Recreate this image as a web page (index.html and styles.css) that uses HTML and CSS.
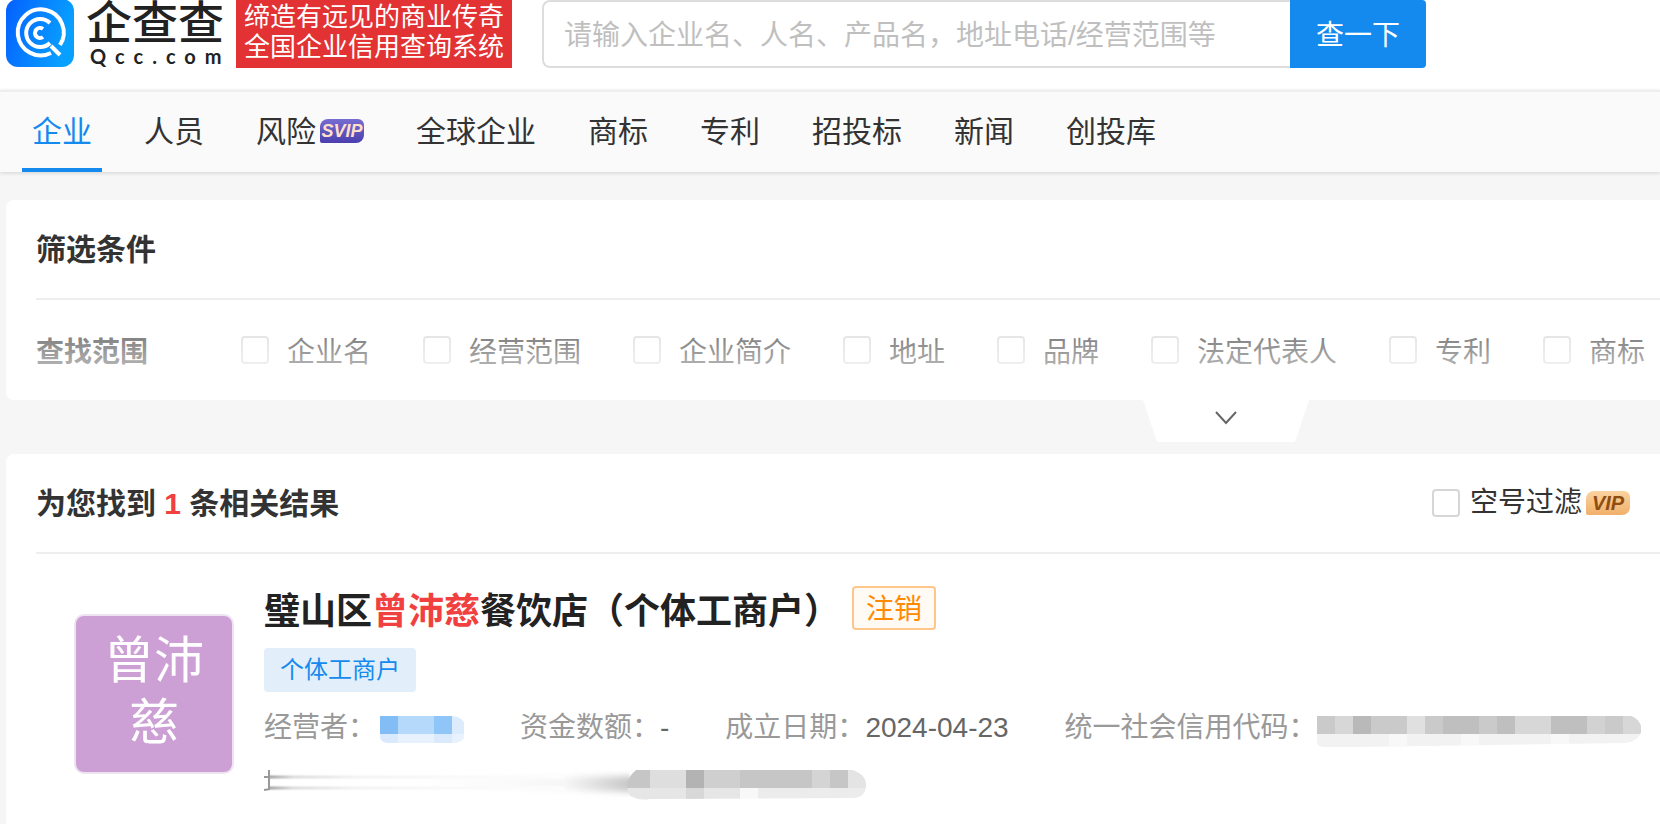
FILE: index.html
```html
<!DOCTYPE html>
<html lang="zh-CN">
<head>
	<meta charset="utf-8">
	<title>企查查</title>
	<link rel="stylesheet" href="styles.css">
</head>
<body>

	<header class="header">
		<a class="logo" href="#home">
			<svg class="logo-icon" width="68" height="68" viewBox="0 0 68 68" aria-hidden="true">
				<defs>
					<linearGradient id="logobg" x1="0" y1="0" x2="1" y2="0.3">
						<stop offset="0" stop-color="#0560ff"/>
						<stop offset="1" stop-color="#08a0ff"/>
					</linearGradient>
				</defs>
				<rect y="-1" width="68" height="68" rx="12" fill="url(#logobg)"/>
				<g fill="none" stroke="#fff" stroke-width="4">
					<path d="M54 45A23 23 0 1 0 45 53"/>
					<path d="M44 23A14 14 0 1 0 44 43"/>
					<path d="M37 29A5 5 0 1 0 37 37"/>
					<path d="M45 46L54 55"/>
				</g>
			</svg>
			<span class="logo-name">
				<span class="logo-cn">企查查</span>
				<span class="logo-en">Qcc.com</span>
			</span>
		</a>
		<div class="slogan">
			<div>缔造有远见的商业传奇</div>
			<div>全国企业信用查询系统</div>
		</div>
		<form class="search">
			<input class="search-input" type="text" aria-label="搜索" placeholder="请输入企业名、人名、产品名，地址电话/经营范围等">
			<button class="search-btn" type="button">查一下</button>
		</form>
	</header>

	<nav class="main-nav">
		<a class="nav-ref active" href="#company">企业</a>
		<a class="nav-ref" href="#person">人员</a>
		<a class="nav-ref" href="#risk">风险<span class="badge svip">SVIP</span></a>
		<a class="nav-ref" href="#global">全球企业</a>
		<a class="nav-ref" href="#brand">商标</a>
		<a class="nav-ref" href="#patent">专利</a>
		<a class="nav-ref" href="#bid">招投标</a>
		<a class="nav-ref" href="#news">新闻</a>
		<a class="nav-ref" href="#venture">创投库</a>
	</nav>

	<main class="content">
		<section class="card filter">
			<h2 class="card-title">筛选条件</h2>
			<div class="filter-row">
				<span class="filter-label">查找范围</span>
				<label class="check"><input type="checkbox">企业名</label>
				<label class="check"><input type="checkbox">经营范围</label>
				<label class="check"><input type="checkbox">企业简介</label>
				<label class="check"><input type="checkbox">地址</label>
				<label class="check"><input type="checkbox">品牌</label>
				<label class="check"><input type="checkbox">法定代表人</label>
				<label class="check"><input type="checkbox">专利</label>
				<label class="check"><input type="checkbox">商标</label>
			</div>
		</section>
		<div class="toggle-bar">
			<button class="toggle" type="button" aria-label="展开">
				<svg width="24" height="16" viewBox="0 0 24 16"><path d="M2 2L12 13L22 2" fill="none" stroke="#666" stroke-width="2"/></svg>
			</button>
		</div>

		<section class="card result">
			<div class="card-title result-head">
				<h2 class="result-count">为您找到 <em>1</em> 条相关结果</h2>
				<label class="check vip-check"><input type="checkbox">空号过滤<span class="badge vip">VIP</span></label>
			</div>
			<article class="company">
				<div class="avatar">曾沛慈</div>
				<div class="info">
					<div class="name-row">
						<a class="name" href="#detail">璧山区<em>曾沛慈</em>餐饮店（个体工商户）</a>
						<span class="status">注销</span>
					</div>
					<span class="tag">个体工商户</span>
					<div class="facts">
						<span class="fact">经营者：<svg class="mask" width="88" height="28" viewBox="-3 0 88 28">
							<clipPath id="m1"><path d="M1 0H74Q87 2 87 14Q87 27 74 27H10Q1 27 1 20Z"/></clipPath>
							<g clip-path="url(#m1)">
								<path fill="#e7f2fe" d="M0 18H87V28H0Z"/>
								<path fill="#dae9fb" d="M0 18H19V28H0ZM55 18H73V28H55Z"/>
								<path fill="#83bdf5" d="M0 0H19V18H0Z"/>
								<path fill="#b5d9fb" d="M19 0H55V18H19Z"/>
								<path fill="#90c5f7" d="M55 0H73V18H55Z"/>
								<path fill="#dcecfc" d="M73 0H87V18H73Z"/>
							</g>
						</svg></span>
						<span class="fact">资金数额：<b>-</b></span>
						<span class="fact">成立日期：<b>2024-04-23</b></span>
						<span class="fact">统一社会信用代码：<svg class="mask" width="324" height="32" viewBox="0 0 324 32">
							<clipPath id="m2"><path d="M0 0H314Q324 4 324 13Q324 25 308 27L40 31H8Q0 31 0 26Z"/></clipPath>
							<g clip-path="url(#m2)">
								<path fill="#f2f2f2" d="M0 18H324V32H0Z"/>
								<path fill="#f8f8f8" d="M72 18H90V32H72ZM144 18H162V32H144ZM234 18H252V32H234Z"/>
								<path fill="#cacaca" d="M0 0H324V18H0Z"/>
								<path fill="#d7d7d7" d="M18 0H36V18H18ZM198 0H234V18H198ZM306 0H324V18H306Z"/>
								<path fill="#b9b9b9" d="M36 0H54V18H36Z"/>
								<path fill="#e0e0e0" d="M90 0H108V18H90Z"/>
								<path fill="#bfbfbf" d="M126 0H162V18H126ZM180 0H198V18H180ZM234 0H270V18H234Z"/>
								<path fill="#d2d2d2" d="M270 0H288V18H270Z"/>
							</g>
						</svg></span>
					</div>
					<svg class="address" width="602" height="32" viewBox="0 0 602 32">
						<defs>
							<linearGradient id="fadeout"><stop offset="0" stop-color="#777"/><stop offset="0.08" stop-color="#ccc"/><stop offset="0.3" stop-color="#eee"/><stop offset="1" stop-color="#fff"/></linearGradient>
							<linearGradient id="fadein"><stop offset="0" stop-color="#fff"/><stop offset="0.7" stop-color="#f6f6f6"/><stop offset="1" stop-color="#c8c8c8"/></linearGradient>
							<filter id="soft" x="-10%" y="-100%" width="120%" height="300%"><feGaussianBlur stdDeviation="1 3"/></filter>
							<filter id="thin" x="0" y="-20%" width="100%" height="140%"><feGaussianBlur stdDeviation="0 1"/></filter>
							<clipPath id="m3"><path d="M372 0H588Q602 4 602 15Q602 27 590 28L386 29Q376 31 366 26Q358 12 372 0Z"/></clipPath>
						</defs>
						<path fill="url(#fadein)" filter="url(#soft)" d="M150 8L366 6V22L150 16Z"/>
						<path fill="url(#fadeout)" filter="url(#thin)" d="M6 6H300V8H6ZM6 17H300V19H6Z"/>
						<path fill="none" stroke="#999" stroke-width="2" d="M5 0V20M0 7H6M0 20L6 19"/>
						<g clip-path="url(#m3)">
							<path fill="#e6e6e6" d="M360 18H476V32H360Z"/>
							<path fill="#d8d8d8" d="M422 18H440V32H422Z"/>
							<path fill="#f8f8f8" d="M476 18H494V32H476Z"/>
							<path fill="#ececec" d="M494 18H602V32H494Z"/>
							<path fill="#c6c6c6" d="M360 0H386V18H360ZM476 0H548V18H476ZM566 0H584V18H566Z"/>
							<path fill="#dedede" d="M386 0H422V18H386Z"/>
							<path fill="#b3b3b3" d="M422 0H440V18H422Z"/>
							<path fill="#cfcfcf" d="M440 0H476V18H440Z"/>
							<path fill="#d4d4d4" d="M548 0H566V18H548Z"/>
							<path fill="#e4e4e4" d="M584 0H602V18H584Z"/>
						</g>
					</svg>
				</div>
			</article>
		</section>
	</main>

</body>
</html>
```
FILE: styles.css
```css
*{
	box-sizing: border-box;
}
body{
	margin: 0;
	min-height: 100vh;
	overflow-x: hidden;
	display: flex;
	flex-direction: column;
	background-color: #f6f6f6;
	color: #333;
	font-family: "Liberation Sans", "Noto Sans CJK SC", sans-serif;
	font-size: 28px;
}
a{
	color: inherit;
	text-decoration: none;
}
em{
	font-style: normal;
	color: #f04040;
}
h2{
	margin: 0;
}
svg{
	display: block;
	flex-shrink: 0;
}
input, button{
	font: inherit;
	margin: 0;
}

/* header */
.header{
	display: flex;
	align-items: flex-start;
	padding: 0 6px 22px;
	background-color: #fff;
}
.logo{
	display: flex;
	gap: 12px;
}
.logo-name{
	display: flex;
	flex-direction: column;
	width: 150px;
	color: #222;
}
.logo-cn{
	font-size: 46px;
	line-height: 46px;
	font-weight: 500;
}
.logo-en{
	padding-left: 4px;
	font-family: Lato, sans-serif;
	font-size: 20px;
	line-height: 20px;
	font-weight: 700;
	letter-spacing: 9px;
}
.slogan{
	height: 68px;
	padding: 2px 8px 0;
	background-color: #e23234;
	color: #fff;
	font-size: 26px;
	line-height: 30px;
	white-space: nowrap;
}
.search{
	display: flex;
	width: 884px;
	margin-left: 30px;
}
.search-input{
	flex: 1;
	min-width: 0;
	height: 68px;
	padding: 4px 20px 0;
	border: 2px solid #ddd;
	border-right: 0;
	border-radius: 8px 0 0 8px;
	background-color: #fff;
	outline: none;
}
.search-input::placeholder{
	color: #bfbfbf;
}
.search-btn{
	width: 136px;
	padding: 0 0 2px;
	border: 0;
	border-radius: 0 4px 4px 0;
	background-color: #158aee;
	color: #fff;
}

/* nav */
.main-nav{
	display: flex;
	gap: 32px;
	padding: 0 22px;
	border-top: 2px solid #eee;
	background-color: #fafafa;
	box-shadow: 0 1px 4px rgba(0,0,0,0.15);
}
.nav-ref{
	display: flex;
	align-items: center;
	height: 80px;
	padding: 0 10px 2px;
	border-bottom: 4px solid transparent;
	font-size: 30px;
	white-space: nowrap;
}
.nav-ref.active{
	color: #158aee;
	border-bottom-color: #158aee;
}
.badge{
	width: 44px;
	height: 24px;
	margin-left: 4px;
	border-radius: 8px 6px 8px 2px;
	font-size: 18px;
	line-height: 24px;
	font-weight: 700;
	font-style: italic;
	text-align: center;
}
.svip{
	margin-top: 4px;
	background: linear-gradient(#766dd2, #4a3fae);
	color: #ffdfc8;
}
.vip{
	background: linear-gradient(#fbd3a0, #f0b06a);
	color: #8f4d12;
	font-size: 20px;
}

/* cards */
.content{
	display: flex;
	flex: 1;
	flex-direction: column;
	padding: 28px 0 0 6px;
}
.card{
	padding-left: 30px;
	border-radius: 8px 0 0 8px;
	background-color: #fff;
}
.card-title{
	height: 100px;
	border-bottom: 2px solid #eee;
	font-size: 30px;
	line-height: 100px;
	font-weight: 700;
}
.filter{
	position: relative;
	overflow: hidden;
}
.filter::after{
	content: "";
	position: absolute;
	left: 0;
	right: 0;
	bottom: 0;
	height: 98px;
	background: linear-gradient(rgba(255,255,255,0.1), rgba(255,255,255,0.9));
	pointer-events: none;
}
.filter-row{
	display: flex;
	align-items: center;
	gap: 52px;
	height: 100px;
	white-space: nowrap;
}
.filter-label{
	width: 153px;
	font-weight: 700;
}
.check{
	display: flex;
	align-items: center;
	gap: 18px;
}
.check input{
	appearance: none;
	width: 28px;
	height: 28px;
	border: 2px solid #d6d6d6;
	border-radius: 4px;
	background-color: #fff;
}
.toggle-bar{
	display: flex;
	justify-content: flex-end;
	height: 54px;
	padding-right: 351px;
}
.toggle{
	display: flex;
	justify-content: center;
	width: 166px;
	height: 42px;
	padding: 10px 0;
	border: 0;
	background-color: #fff;
	clip-path: polygon(0 0, 100% 0, 152px 100%, 14px 100%);
}

/* result */
.result{
	flex: 1;
	border-bottom-left-radius: 0;
}
.result-head{
	display: flex;
	justify-content: space-between;
	padding-right: 30px;
}
.result-count{
	font-size: 30px;
	font-weight: 700;
}
.vip-check{
	gap: 10px;
	font-size: 28px;
	font-weight: 400;
}
.vip-check .badge{
	margin-left: -6px;
}
.company{
	display: flex;
	align-items: flex-start;
	gap: 30px;
	padding: 32px 0 24px 38px;
}
.avatar{
	width: 160px;
	height: 160px;
	margin-top: 28px;
	padding: 14px 26px;
	border: 2px solid #eee4f1;
	border-radius: 10px;
	background-color: #cc9fd5;
	color: #fff;
	font-size: 50px;
	line-height: 62px;
	text-align: center;
}
.name-row{
	display: flex;
	align-items: center;
	gap: 12px;
	height: 44px;
	margin-bottom: 18px;
	white-space: nowrap;
}
.name{
	color: #222;
	font-size: 36px;
	font-weight: 700;
}
.status{
	padding: 4px 12px 0;
	border: 2px solid #ffc68c;
	border-radius: 4px;
	background-color: #fffaf3;
	color: #ff8900;
	line-height: 36px;
}
.tag{
	display: inline-block;
	padding: 0 16px;
	border-radius: 4px;
	background-color: #e2effb;
	color: #158aee;
	font-size: 24px;
	line-height: 44px;
}
.facts{
	display: flex;
	gap: 56px;
	margin-top: 16px;
	color: #999;
	line-height: 40px;
	white-space: nowrap;
}
.fact{
	display: flex;
}
.fact b{
	color: #666;
	font-weight: 400;
}
.mask{
	margin-top: 8px;
}
.address{
	margin-top: 22px;
}
```
